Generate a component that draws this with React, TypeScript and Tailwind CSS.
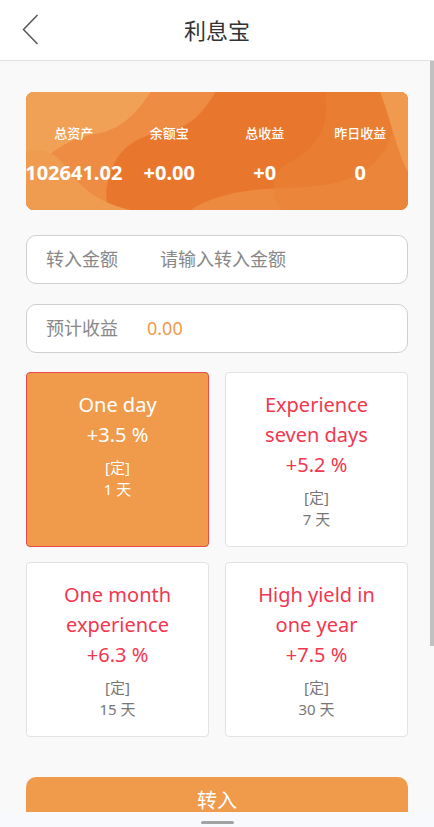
import React from "react";

interface Plan {
  title: string[];
  rate: string;
  days: string;
  active?: boolean;
}

const plans: Plan[] = [
  { title: ["One day"], rate: "+3.5 %", days: "1 天", active: true },
  { title: ["Experience", "seven days"], rate: "+5.2 %", days: "7 天" },
  { title: ["One month", "experience"], rate: "+6.3 %", days: "15 天" },
  { title: ["High yield in", "one year"], rate: "+7.5 %", days: "30 天" },
];

const stats = [
  { label: "总资产", value: "102641.02" },
  { label: "余额宝", value: "+0.00" },
  { label: "总收益", value: "+0" },
  { label: "昨日收益", value: "0" },
];

const font = {
  fontFamily: '"Noto Sans", "Noto Sans CJK SC", sans-serif',
};

function CardWaves() {
  return (
    <svg
      className="absolute inset-0 h-full w-full"
      viewBox="0 0 383 118"
      preserveAspectRatio="none"
    >
      <rect width="383" height="118" fill="#e8772d" />
      <path
        d="M0 0 H190 C178 20 165 35 145 38 C120 42 95 50 85 80 C78 100 80 110 85 118 H0 Z"
        fill="#ed8c42"
      />
      <path
        d="M0 0 H125 C110 22 95 38 70 42 C45 46 20 60 10 80 C5 95 3 108 0 118 Z"
        fill="#f0a156"
      />
      <path
        d="M0 118 V60 C15 55 30 60 40 75 C55 95 70 110 105 118 Z"
        fill="#ef9b50"
      />
      <path
        d="M165 118 C185 105 215 97 260 96 C300 95 330 90 350 70 C365 55 370 40 372 0 H383 V118 Z"
        fill="#ec8a3f"
      />
      <path
        d="M300 0 C305 30 295 55 265 70 C245 80 245 100 255 118 H383 V0 Z"
        fill="#ea8236"
        opacity="0.6"
      />
      <path d="M355 0 C365 25 372 60 383 80 V0 Z" fill="#ef9a4f" />
    </svg>
  );
}

function PlanCard({ plan }: { plan: Plan }) {
  return (
    <div
      className={`flex h-full flex-col items-center rounded-[4px] border pt-[17px] text-center ${
        plan.active
          ? "border-[#ec4a4a] bg-[#f09b4c] text-white"
          : "border-[#e3e3e3] bg-white text-[#f2374f]"
      }`}
    >
      {plan.title.map((t) => (
        <div key={t} className="text-[20px] leading-[30px]">
          {t}
        </div>
      ))}
      <div className="text-[20px] leading-[30px]">{plan.rate}</div>
      <div
        className={`mt-[6px] text-[15px] leading-[22px] ${
          plan.active ? "text-white" : "text-[#777]"
        }`}
      >
        <div>[定]</div>
        <div>{plan.days}</div>
      </div>
    </div>
  );
}

export default function App() {
  return (
    <div
      className="relative h-[827px] w-[434px] overflow-hidden bg-[#f9f9f9]"
      style={font}
    >
      <header className="relative flex h-[61px] items-center justify-center border-b border-[#e2e2e2] bg-white">
        <svg
          className="absolute left-[20px] top-[13px]"
          width="22"
          height="33"
          viewBox="0 0 22 33"
        >
          <path
            d="M17.5 2 L3.5 16.5 L17.5 31"
            fill="none"
            stroke="#555"
            strokeWidth="1.5"
          />
        </svg>
        <h1 className="text-[22px] text-[#333]">利息宝</h1>
      </header>

      <main className="px-[26px] pt-[31px]">
        <div className="relative h-[118px] overflow-hidden rounded-[8px]">
          <CardWaves />
          <div className="relative grid grid-cols-4 text-center text-white">
            {stats.map((s) => (
              <div key={s.label} className="flex flex-col items-center">
                <div className="mt-[32px] text-[13px] leading-[18px] font-medium">
                  {s.label}
                </div>
                <div className="mt-[19px] text-[20px] leading-[24px] font-bold">
                  {s.value}
                </div>
              </div>
            ))}
          </div>
        </div>

        <div className="mt-[25px] flex h-[49px] items-center rounded-[10px] border border-[#cfcfcf] bg-white px-[19px]">
          <span className="w-[114px] text-[18px] text-[#888]">转入金额</span>
          <span className="text-[18px] text-[#888]">请输入转入金额</span>
        </div>

        <div className="mt-[20px] flex h-[49px] items-center rounded-[10px] border border-[#cfcfcf] bg-white px-[19px]">
          <span className="w-[101px] text-[18px] text-[#888]">预计收益</span>
          <span className="text-[18px] text-[#f09a4b]">0.00</span>
        </div>

        <div className="mt-[19px] grid grid-cols-2 gap-x-[16px] gap-y-[15px]">
          {plans.map((p) => (
            <div key={p.rate} className="h-[175px]">
              <PlanCard plan={p} />
            </div>
          ))}
        </div>

        <button className="mt-[40px] flex h-[48px] w-full items-center justify-center rounded-[10px] bg-[#f09b4c] text-[20px] text-white">
          转入
        </button>
      </main>

      <div className="absolute right-0 top-[61px] h-[585px] w-[4px] bg-[#c1c1c1]" />

      <div className="absolute bottom-0 left-0 flex h-[15px] w-full items-start justify-center bg-[#f8f9fc]">
        <div className="mt-[9px] h-[3px] w-[33px] rounded-full bg-[#a3a3a3]" />
      </div>
    </div>
  );
}
